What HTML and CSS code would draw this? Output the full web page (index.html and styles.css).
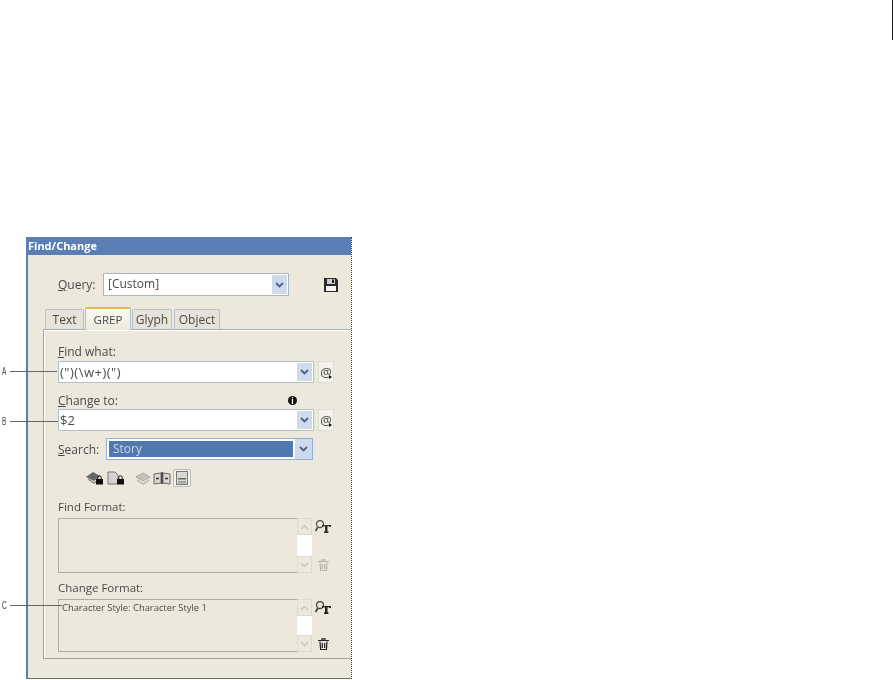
FILE: index.html
```html
<!DOCTYPE html>
<html>

<head>
    <meta charset="UTF-8">
    <link rel="stylesheet" href="styles.css">
    <title>Find/Change</title>
</head>

<body>
    <div class="page-mark"></div>

    <div class="dialog">
        <div class="titlebar">Find/Change</div>

        <div class="query-row">
            <label class="query-label"><u>Q</u>uery:</label>
            <div class="combo query-combo">
                <span class="combo-text">[Custom]</span>
                <span class="combo-arrow"><svg width="9" height="6" viewBox="0 0 9 6"><path d="M1 1l3.500 3.500L8 1" fill="none" stroke="#4a6488" stroke-width="1.800"/></svg></span>
            </div>
            <svg class="save-icon" width="14" height="14" viewBox="0 0 14 14">
                <path d="M0 0h12l2 2v12H0z" fill="#2a2a2a"/>
                <rect x="3" y="1" width="8" height="5" fill="#ccc"/>
                <rect x="8" y="1.500" width="2" height="3.500" fill="#222"/>
                <rect x="2" y="8" width="10" height="5" fill="#f6f6f0"/>
            </svg>
        </div>

        <div class="tabs">
            <div class="tab tab-text">Text</div>
            <div class="tab tab-grep">GREP</div>
            <div class="tab tab-glyph">Glyph</div>
            <div class="tab tab-object">Object</div>
        </div>

        <div class="panel">
            <label class="field-label label-find"><u>F</u>ind what:</label>
            <div class="field-row">
                <div class="combo wide-combo">
                    <span class="combo-text grep-text">(")(\w+)(")</span>
                    <span class="combo-arrow"><svg width="9" height="6" viewBox="0 0 9 6"><path d="M1 1l3.500 3.500L8 1" fill="none" stroke="#4a6488" stroke-width="1.800"/></svg></span>
                </div>
                <div class="at-button">@<i></i></div>
            </div>

            <div class="change-head">
                <label class="field-label label-change"><u>C</u>hange to:</label>
                <span class="info-dot">i</span>
            </div>
            <div class="field-row">
                <div class="combo wide-combo">
                    <span class="combo-text">$2</span>
                    <span class="combo-arrow"><svg width="9" height="6" viewBox="0 0 9 6"><path d="M1 1l3.500 3.500L8 1" fill="none" stroke="#4a6488" stroke-width="1.800"/></svg></span>
                </div>
                <div class="at-button">@<i></i></div>
            </div>

            <div class="search-row">
                <label class="field-label"><u>S</u>earch:</label>
                <div class="combo search-combo">
                    <span class="search-value">Story</span>
                    <span class="combo-arrow"><svg width="9" height="6" viewBox="0 0 9 6"><path d="M1 1l3.500 3.500L8 1" fill="none" stroke="#4a6488" stroke-width="1.800"/></svg></span>
                </div>
            </div>

            <div class="option-icons">
                <svg width="20" height="14" viewBox="0 0 20 14">
                    <path d="M1 6l7-5 7 4-6 5z" fill="#666"/>
                    <path d="M3 8l6 4 4-3" fill="none" stroke="#888" stroke-width="1.500"/>
                    <rect x="11" y="8" width="7" height="5.500" fill="#111"/>
                    <path d="M12.800 8V6.500a1.700 1.700 0 0 1 3.400 0V8" fill="none" stroke="#111"/>
                </svg>
                <svg width="18" height="14" viewBox="0 0 18 14">
                    <path d="M1 1h7l3 3v9H1z" fill="#d4d4cc" stroke="#777"/>
                    <rect x="10" y="8" width="7" height="5.500" fill="#111"/>
                    <path d="M11.800 8V6.500a1.700 1.700 0 0 1 3.400 0V8" fill="none" stroke="#111"/>
                </svg>
                <svg class="icon-gap" width="16" height="14" viewBox="0 0 16 14">
                    <path d="M1 6l7-4 7 4-7 4z" fill="#c4c4bc" stroke="#a8a8a0"/>
                    <path d="M2 9l6 4 6-4" fill="none" stroke="#b4b4ac" stroke-width="1.500"/>
                </svg>
                <svg width="18" height="14" viewBox="0 0 18 14">
                    <path d="M1 3l7-1v10l-7 1zM17 3l-7-1v10l7 1z" fill="#d8d8d0" stroke="#666"/>
                    <path d="M3 7.500h3M12 7.500h3M9 1v12" stroke="#333" stroke-width="1.500"/>
                </svg>
                <span class="toggle-on">
                    <svg width="12" height="14" viewBox="0 0 12 14">
                        <rect x="0.500" y="0.500" width="11" height="13" fill="#d8d8d4" stroke="#777"/>
                        <rect x="2" y="7" width="8" height="1.500" fill="#666"/>
                        <rect x="2" y="10" width="8" height="2.500" fill="#a4a4a0"/>
                    </svg>
                </span>
            </div>

            <label class="field-label label-format">Find Format:</label>
            <div class="format-row find-format">
                <div class="format-box">
                    <div class="format-text"></div>
                    <div class="scroller">
                        <span class="scroll-btn"><svg width="9" height="6" viewBox="0 0 9 6"><path d="M1 5l3.500-3.500L8 5" fill="none" stroke="#c4c8c4" stroke-width="1.500"/></svg></span>
                        <span class="scroll-btn"><svg width="9" height="6" viewBox="0 0 9 6"><path d="M1 1l3.500 3.500L8 1" fill="none" stroke="#c4c8c4" stroke-width="1.500"/></svg></span>
                    </div>
                </div>
                <div class="format-tools">
                    <svg width="16" height="13" viewBox="0 0 16 13">
                        <circle cx="5" cy="4" r="3.500" fill="none" stroke="#555" stroke-width="1.300"/>
                        <path d="M3 7L0.500 11" stroke="#555" stroke-width="1.800"/>
                        <path d="M7 5h9v2h-1.500l-.5-.8h-1.500V11l1 .8V13H9v-1.200l1-.8V6.200H8.500L8 7H7z" fill="#333"/>
                    </svg>
                    <svg class="trash" width="11" height="12" viewBox="0 0 11 12">
                        <path d="M0 2.500h11M4 2V.800h3V2M2 3.500l.6 8h5.800l.6-8M4.300 5v5M6.700 5v5" fill="none" stroke="#b4b4ac" stroke-width="1.200"/>
                    </svg>
                </div>
            </div>

            <label class="field-label label-format">Change Format:</label>
            <div class="format-row change-format">
                <div class="format-box">
                    <div class="format-text">Character Style: Character Style 1</div>
                    <div class="scroller">
                        <span class="scroll-btn"><svg width="9" height="6" viewBox="0 0 9 6"><path d="M1 5l3.500-3.500L8 5" fill="none" stroke="#c4c8c4" stroke-width="1.500"/></svg></span>
                        <span class="scroll-btn"><svg width="9" height="6" viewBox="0 0 9 6"><path d="M1 1l3.500 3.500L8 1" fill="none" stroke="#c4c8c4" stroke-width="1.500"/></svg></span>
                    </div>
                </div>
                <div class="format-tools">
                    <svg width="16" height="13" viewBox="0 0 16 13">
                        <circle cx="5" cy="4" r="3.500" fill="none" stroke="#444" stroke-width="1.300"/>
                        <path d="M3 7L0.500 11" stroke="#444" stroke-width="1.800"/>
                        <path d="M7 5h9v2h-1.500l-.5-.8h-1.500V11l1 .8V13H9v-1.200l1-.8V6.200H8.500L8 7H7z" fill="#222"/>
                    </svg>
                    <svg class="trash" width="11" height="12" viewBox="0 0 11 12">
                        <path d="M0 2.500h11M4 2V.800h3V2M2 3.500l.6 8h5.800l.6-8M4.300 5v5M6.700 5v5" fill="none" stroke="#222" stroke-width="1.200"/>
                    </svg>
                </div>
            </div>
        </div>
    </div>

    <div class="callout callout-a"><span>A</span><i></i></div>
    <div class="callout callout-b"><span>B</span><i></i></div>
    <div class="callout callout-c"><span>C</span><i></i></div>
</body>

</html>
```

FILE: styles.css
```css
* {
    box-sizing: border-box;
}

html, body {
    margin: 0;
    height: 680px;
    overflow: hidden;
    background: #fff;
}

body {
    padding: 237px 0 0 26px;
    font-family: "Open Sans", "Noto Sans", sans-serif;
    font-size: 12px;
    color: #4a4a4a;
}

u {
    text-underline-offset: 1px;
}

.page-mark {
    position: absolute;
    right: 0;
    top: 0;
    width: 1px;
    height: 40px;
    background: #222;
}

.dialog {
    width: 326px;
    height: 442px;
    background: #ece9dc;
    border-left: 2px solid #5b7fb4;
    border-right: 1px dotted #444;
    border-bottom: 1px solid #6f6a58;
    filter: blur(.35px);
}

.titlebar {
    height: 18px;
    margin-left: -2px;
    padding-left: 2px;
    background: #5b7fb4;
    color: #fff;
    font-size: 11px;
    font-weight: 700;
    line-height: 18px;
}

.query-row {
    display: flex;
    align-items: center;
    height: 23px;
    margin-top: 18px;
    padding-left: 30px;
}

.query-label {
    width: 45px;
}

.combo {
    display: flex;
    align-items: stretch;
    background: #fff;
    border: 1px solid #a9b6c0;
}

.combo-text {
    flex: 1;
    padding-left: 4px;
    line-height: 20px;
    white-space: nowrap;
}

.combo-arrow {
    display: flex;
    align-items: center;
    justify-content: center;
    width: 15px;
    margin: 1px 1px 1px 0;
    background: #cfdaea;
}

.query-combo {
    width: 186px;
    height: 23px;
}

.save-icon {
    margin-left: 35px;
}

.tabs {
    display: flex;
    align-items: flex-end;
    height: 22px;
    margin-top: 11px;
    padding-left: 17px;
}

.tab {
    height: 20px;
    margin-right: 1px;
    text-align: center;
    line-height: 19px;
    background: #e6e4d8;
    border: 1px solid #b7c0c8;
    border-bottom: 0;
    border-radius: 2px 2px 0 0;
}

.tab-text {
    width: 39px;
}

.tab-grep {
    position: relative;
    z-index: 1;
    width: 46px;
    height: 23px;
    margin-bottom: -1px;
    padding-top: 1px;
    font-size: 11.5px;
    background: linear-gradient(#fbfaf5, #ece9dc);
    border-top: 2px solid #e5b54e;
}

.tab-glyph {
    width: 40px;
    margin-right: 2px;
}

.tab-object {
    width: 46px;
}

.panel {
    height: 330px;
    margin-left: 15px;
    padding: 13px 0 0 14px;
    border-top: 1px solid #a3afb8;
    border-left: 1px solid #a5a597;
    border-bottom: 1px solid #a5a597;
    box-shadow: inset 1px 1px 0 #fff;
}

.field-label {
    display: block;
    line-height: 17px;
}

.label-find {
    height: 18px;
}

.field-row {
    display: flex;
    align-items: flex-start;
}

.wide-combo {
    width: 256px;
    height: 22px;
    border-color: #b3c0cc;
}

.wide-combo .combo-text {
    padding-left: 1px;
    font-size: 13px;
}

.wide-combo .grep-text {
    letter-spacing: .5px;
}

.at-button {
    position: relative;
    width: 16px;
    height: 22px;
    margin-left: 4px;
    text-align: center;
    line-height: 20px;
    font-size: 13px;
    color: #444;
    background: #f4f2ea;
    border: 1px solid #e2e0d4;
}

.at-button i {
    position: absolute;
    right: 1px;
    bottom: 3px;
    border-left: 3px solid #111;
    border-top: 2px solid transparent;
    border-bottom: 2px solid transparent;
}

.change-head {
    display: flex;
    justify-content: space-between;
    align-items: center;
    width: 239px;
    height: 17px;
    margin-top: 9px;
}

.info-dot {
    width: 9px;
    height: 9px;
    border-radius: 50%;
    background: #111;
    color: #fff;
    font-size: 8px;
    font-weight: 700;
    line-height: 9px;
    text-align: center;
}

.search-row {
    display: flex;
    align-items: center;
    height: 22px;
    margin-top: 7px;
}

.search-row .field-label {
    width: 48px;
}

.search-combo {
    width: 207px;
    height: 22px;
    padding: 2px;
    border-color: #8fb2d4;
}

.search-value {
    flex: 1;
    padding-left: 4px;
    background: #4f78ae;
    color: #c9d8ea;
    line-height: 16px;
}

.search-combo .combo-arrow {
    width: 17px;
    margin: -2px -2px -2px 2px;
}

.option-icons {
    display: flex;
    align-items: center;
    gap: 2px;
    height: 20px;
    margin-top: 8px;
    padding-left: 27px;
}

.icon-gap {
    margin-left: 8px;
}

.toggle-on {
    display: flex;
    align-items: center;
    justify-content: center;
    width: 18px;
    height: 18px;
    background: #f4f2ea;
    border: 1px solid #b9bbb6;
    border-radius: 2px;
}

.label-format {
    height: 20px;
    font-size: 11.5px;
    line-height: 18px;
}

.option-icons + .label-format {
    margin-top: 10px;
}

.format-row {
    display: flex;
}

.find-format {
    height: 55px;
    margin-bottom: 6px;
}

.change-format {
    height: 53px;
}

.format-box {
    display: flex;
    width: 254px;
    border: 1px solid #aeae9f;
    border-right: 0;
}

.format-text {
    flex: 1;
    padding: 0 0 0 3px;
    font-size: 9.4px;
    line-height: 15px;
}

.scroller {
    display: flex;
    flex-direction: column;
    justify-content: space-between;
    width: 15px;
    margin: -1px 0;
    background: #fff;
}

.scroll-btn {
    display: flex;
    align-items: center;
    justify-content: center;
    height: 17px;
    background: #ece9dc;
    border: 1px solid #dcdbd0;
}

.format-tools {
    display: flex;
    flex-direction: column;
    justify-content: space-between;
    align-items: center;
    width: 22px;
    padding: 2px 0;
}

.callout {
    position: absolute;
    display: flex;
    align-items: center;
    left: 2px;
    height: 12px;
    font-family: "Liberation Sans", sans-serif;
    font-size: 11px;
    color: #444;
    filter: blur(.3px);
}

.callout span {
    width: 8px;
    transform: scaleX(.6);
    transform-origin: left;
}

.callout i {
    display: block;
    height: 1px;
    background: #666;
}

.callout-a {
    top: 365px;
}

.callout-a i {
    width: 47px;
}

.callout-b {
    top: 415px;
}

.callout-b i {
    width: 48px;
}

.callout-c {
    top: 599px;
}

.callout-c i {
    width: 52px;
}
```
